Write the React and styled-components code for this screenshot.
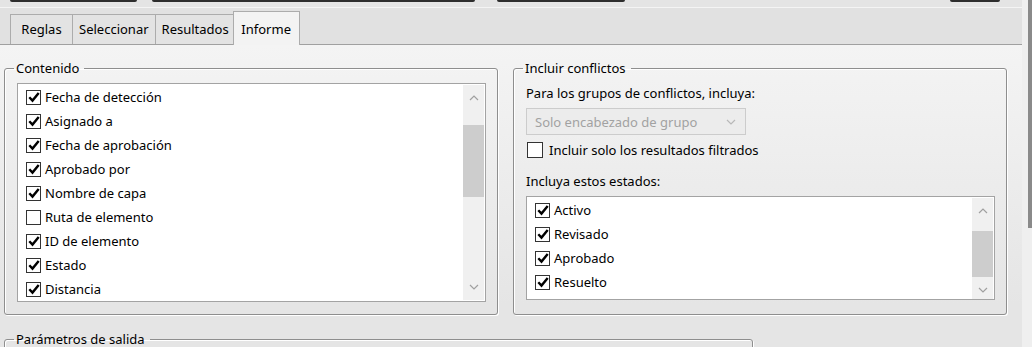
import React from 'react';
import styled, { createGlobalStyle, css } from 'styled-components';

const GlobalStyle = createGlobalStyle`
  html, body {
    margin: 0;
    padding: 0;
    background: #e6e6e6;
  }
  body {
    font-family: "Noto Sans", "Liberation Sans", sans-serif;
    font-size: 13px;
    color: #000;
  }
`;

const Window = styled.div`
  display: grid;
  grid-template-columns: 1fr 10px;
  width: 1032px;
  height: 347px;
  overflow: hidden;
`;

const Main = styled.div`
  display: flex;
  flex-direction: column;
  min-width: 0;
`;

const OuterScroll = styled.div`
  background: #efefef;
  display: flex;
  justify-content: flex-end;

  &::after {
    content: '';
    width: 4px;
    height: 228px;
    background: #8a8a8a;
  }
`;

const TopBar = styled.div`
  display: flex;
  height: 7px;
  background: #e4e4e4;
`;

const TopButton = styled.div`
  height: 2px;
  width: ${p => p.$w}px;
  margin-left: ${p => p.$ml}px;
  background: #2d2d2d;
  border-radius: 0 0 2px 2px;
`;

const TabStrip = styled.div`
  display: flex;
  align-items: flex-end;
  height: 36px;
  padding-left: 10px;
  background: #e1e1e1;
  border-top: 1px solid #f4f4f4;
  border-bottom: 1px solid #a0a0a0;
`;

const Tab = styled.div`
  display: flex;
  align-items: center;
  justify-content: center;
  min-width: 63px;
  height: 30px;
  padding: 0 6px 1px;
  margin-right: -1px;
  box-sizing: border-box;
  border: 1px solid #acacac;
  border-bottom: none;
  background: #e3e3e3;
  white-space: nowrap;

  ${p => p.$active && css`
    min-width: 67px;
    height: 34px;
    margin-left: -2px;
    margin-bottom: -1px;
    background: #f3f3f3;
    position: relative;
    z-index: 1;
    padding-top: 1px;
  `}
`;

const Page = styled.div`
  flex: 1;
  padding: 15px 16px 0 4px;
  background: linear-gradient(#f4f4f4 0px, #ececec 140px, #e5e5e5 260px);
`;

const Columns = styled.div`
  display: grid;
  grid-template-columns: 494px 494px;
  gap: 15px;
`;

const Group = styled.fieldset`
  margin: 0;
  padding: 0 11px 12px 12px;
  min-width: 0;
  border: 1px solid #8e8e8e;
  border-radius: 3px;
  box-shadow: 1px 1px 0 #fff, inset 1px 1px 0 #fff;
  width: ${p => (p.$w ? `${p.$w}px` : 'auto')};
  box-sizing: border-box;
  ${p => p.$mt && css`margin-top: ${p.$mt}px;`}
`;

const Legend = styled.legend`
  margin-left: -3px;
  padding: 0 5px 0 2px;
  line-height: 17px;
`;

const ListBox = styled.div`
  display: grid;
  grid-template-columns: 1fr 22px;
  height: ${p => p.$h}px;
  margin-top: ${p => p.$mt}px;
  border: 1px solid #a3a3a3;
  background: #fff;
  overflow: hidden;
`;

const Items = styled.div`
  padding-top: ${p => p.$pt}px;
`;

const Item = styled.div`
  display: flex;
  align-items: center;
  gap: 4px;
  height: 24px;
  padding-left: 8px;
  white-space: nowrap;
`;

const Box = styled.span`
  display: inline-flex;
  align-items: center;
  justify-content: center;
  width: ${p => p.$size}px;
  height: ${p => p.$size}px;
  box-sizing: border-box;
  border: 1px solid #333;
  background: #fff;
  flex: none;
`;

const ScrollTrack = styled.div`
  display: grid;
  grid-template-rows: 26px ${p => p.$gap}px ${p => p.$thumb}px 1fr 26px;
  background: #f0f0f0;
  margin: 1px 1px 1px 0;
`;

const Thumb = styled.div`
  grid-row: 3;
  background: #cdcdcd;
`;

const Arrow = styled.div`
  display: flex;
  align-items: center;
  justify-content: center;
  grid-row: ${p => p.$row};
`;

const Label = styled.div`
  line-height: 18px;
  white-space: nowrap;
  margin-top: ${p => p.$mt}px;
`;

const Combo = styled.div`
  display: flex;
  align-items: center;
  justify-content: space-between;
  width: 220px;
  height: 27px;
  box-sizing: border-box;
  margin-top: 6px;
  padding: 0 9px 0 8px;
  border: 1px solid #cccccc;
  background: #ececec;
  color: #a2a2a2;
`;

const CheckRow = styled.label`
  display: flex;
  align-items: center;
  gap: 6px;
  margin-top: 6px;
  padding-left: 1px;
  white-space: nowrap;
`;

const Chevron = ({ up, color = '#a0a0a0' }) => (
  <svg width="10" height="6" viewBox="0 0 10 6">
    <polyline
      points={up ? '1,5 5,1 9,5' : '1,1 5,5 9,1'}
      fill="none"
      stroke={color}
      strokeWidth="1.2"
    />
  </svg>
);

const Check = ({ checked, size = 15 }) => (
  <Box $size={size}>
    {checked && (
      <svg width="12" height="12" viewBox="0 0 12 12">
        <polyline points="1.3,6.2 4.5,9.6 10.7,2" fill="none" stroke="#000" strokeWidth="2.4" />
      </svg>
    )}
  </Box>
);

const Scroll = ({ gap, thumb }) => (
  <ScrollTrack $gap={gap} $thumb={thumb}>
    <Arrow $row={1}><Chevron up /></Arrow>
    <Thumb />
    <Arrow $row={5}><Chevron /></Arrow>
  </ScrollTrack>
);

const contentItems = [
  ['Fecha de detección', true],
  ['Asignado a', true],
  ['Fecha de aprobación', true],
  ['Aprobado por', true],
  ['Nombre de capa', true],
  ['Ruta de elemento', false],
  ['ID de elemento', true],
  ['Estado', true],
  ['Distancia', true],
];

const states = ['Activo', 'Revisado', 'Aprobado', 'Resuelto'];

const tabs = ['Reglas', 'Seleccionar', 'Resultados', 'Informe'];

export default function App() {
  return (
    <Window>
      <GlobalStyle />
      <Main>
        <TopBar>
          <TopButton $ml={10} $w={127} />
          <TopButton $ml={15} $w={323} />
          <TopButton $ml={22} $w={128} />
          <TopButton $ml={325} $w={50} />
        </TopBar>
        <TabStrip>
          {tabs.map(t => (
            <Tab key={t} $active={t === 'Informe'}>{t}</Tab>
          ))}
        </TabStrip>
        <Page>
          <Columns>
            <Group>
              <Legend>Contenido</Legend>
              <ListBox $h={217} $mt={6}>
                <Items $pt={1}>
                  {contentItems.map(([name, on]) => (
                    <Item key={name}>
                      <Check checked={on} />
                      {name}
                    </Item>
                  ))}
                </Items>
                <Scroll gap={14} thumb={72} />
              </ListBox>
            </Group>
            <Group>
              <Legend>Incluir conflictos</Legend>
              <Label $mt={7}>Para los grupos de conflictos, incluya:</Label>
              <Combo>
                Solo encabezado de grupo
                <Chevron color="#b8b8b8" />
              </Combo>
              <CheckRow>
                <Check size={16} />
                Incluir solo los resultados filtrados
              </CheckRow>
              <Label $mt={13}>Incluya estos estados:</Label>
              <ListBox $h={102} $mt={6}>
                <Items $pt={1}>
                  {states.map(s => (
                    <Item key={s}>
                      <Check checked />
                      {s}
                    </Item>
                  ))}
                </Items>
                <Scroll gap={7} thumb={46} />
              </ListBox>
            </Group>
          </Columns>
          <Group $w={749} $mt={16}>
            <Legend>Parámetros de salida</Legend>
            <ListBox $h={60} $mt={6} />
          </Group>
        </Page>
      </Main>
      <OuterScroll />
    </Window>
  );
}
